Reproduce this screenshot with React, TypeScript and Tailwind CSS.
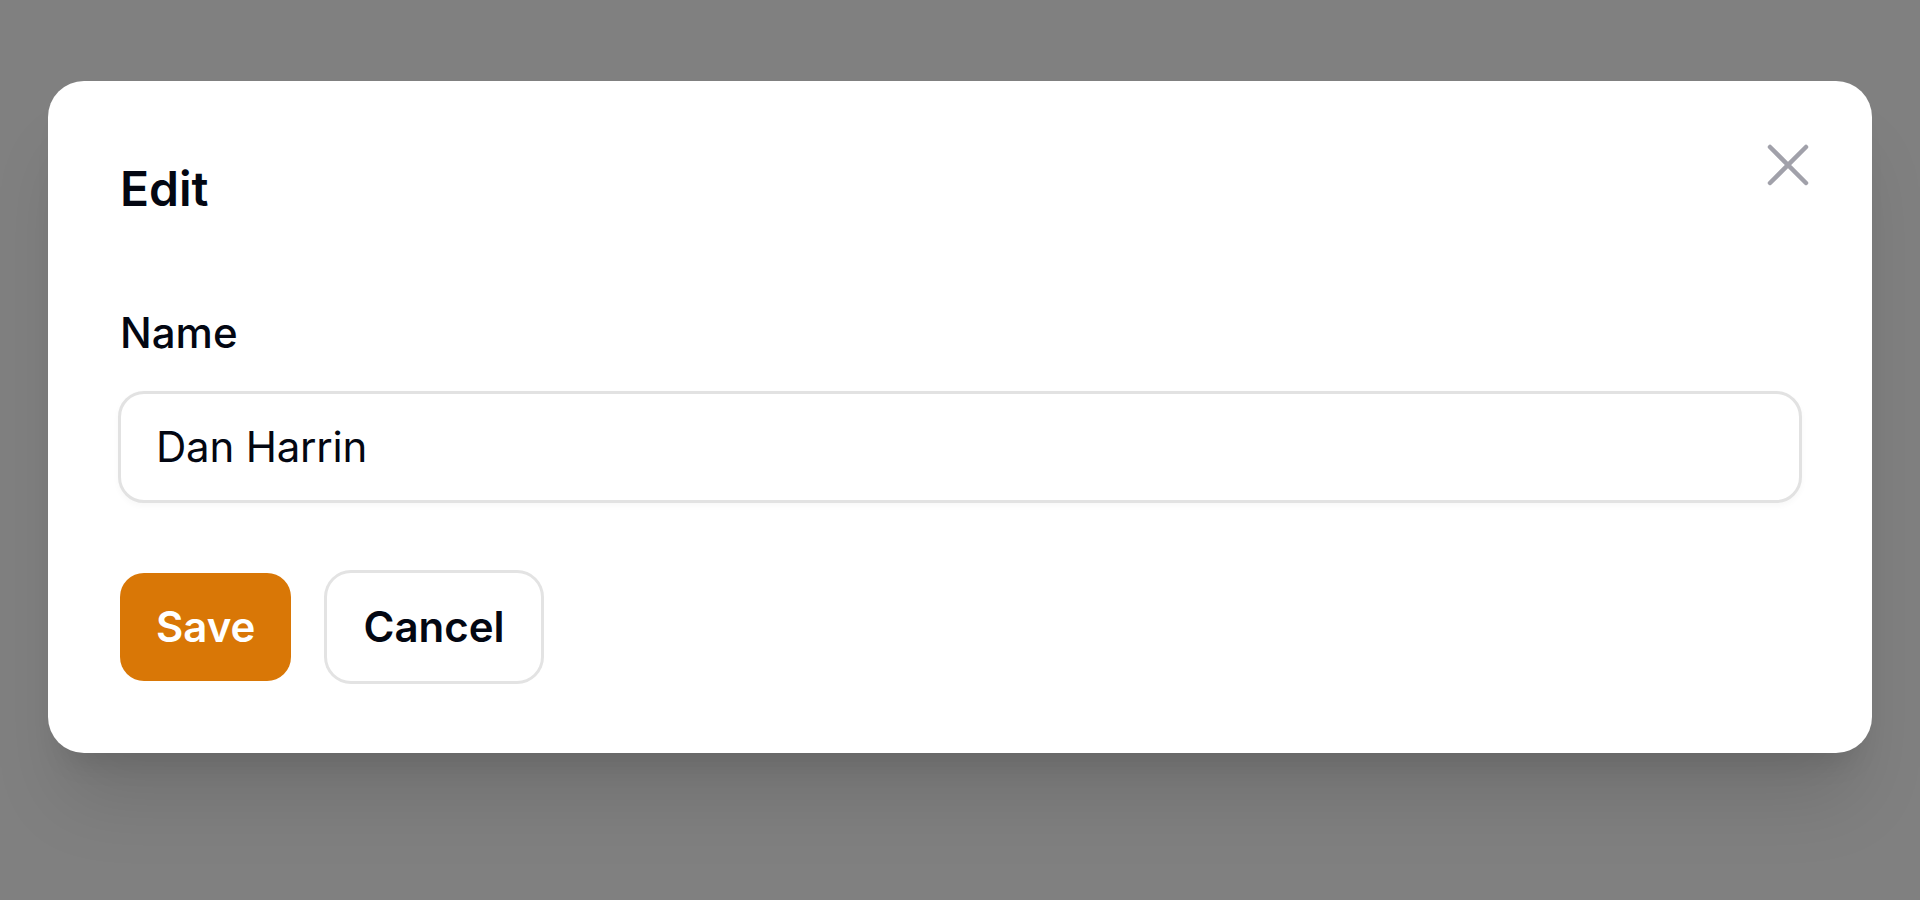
import React from "react";

export default function App() {
  return (
    <div
      className="min-h-[900px] w-full bg-[#808080] px-[48px] pt-[81px]"
      style={{ fontFamily: "Inter, 'Noto Sans', sans-serif" }}
    >
      <div className="relative rounded-[36px] bg-white p-[72px] shadow-[0_60px_75px_-15px_rgba(0,0,0,0.12),0_24px_30px_-18px_rgba(0,0,0,0.12)]">
        <button
          type="button"
          className="absolute right-[48px] top-[48px] flex h-[72px] w-[72px] items-center justify-center"
          aria-label="Close"
        >
          <svg
            viewBox="0 0 24 24"
            className="h-[72px] w-[72px]"
            fill="none"
            stroke="#a1a1aa"
            strokeWidth={1.5}
            strokeLinecap="round"
            strokeLinejoin="round"
          >
            <path d="M6 18 18 6M6 6l12 12" />
          </svg>
        </button>

        <h2 className="text-[48px] font-semibold leading-[72px] text-[#030712]">Edit</h2>

        <div className="mt-[72px] flex flex-col">
          <label className="text-[42px] font-medium leading-[72px] text-[#030712]">Name</label>
          <div className="mx-[-2px] mt-[22px] flex h-[112px] items-center rounded-[26px] border-[3px] border-[#e2e2e2] bg-white px-[35px] shadow-[0_3px_6px_rgba(0,0,0,0.03)]">
            <span className="text-[42px] leading-[72px] tracking-[-0.005em] text-[#030712]">Dan Harrin</span>
          </div>
        </div>

        <div className="mt-[70px] flex items-center gap-[36px]">
          <button
            type="button"
            className="flex h-[108px] items-center rounded-[24px] bg-[#d97706] px-[36px] text-[42px] font-semibold leading-[60px] text-white"
          >
            Save
          </button>
          <button
            type="button"
            className="flex h-[108px] items-center rounded-[24px] bg-white px-[36px] text-[42px] font-semibold leading-[60px] text-[#030712] ring-[3px] ring-[#e3e3e3]"
          >
            Cancel
          </button>
        </div>
      </div>
    </div>
  );
}
